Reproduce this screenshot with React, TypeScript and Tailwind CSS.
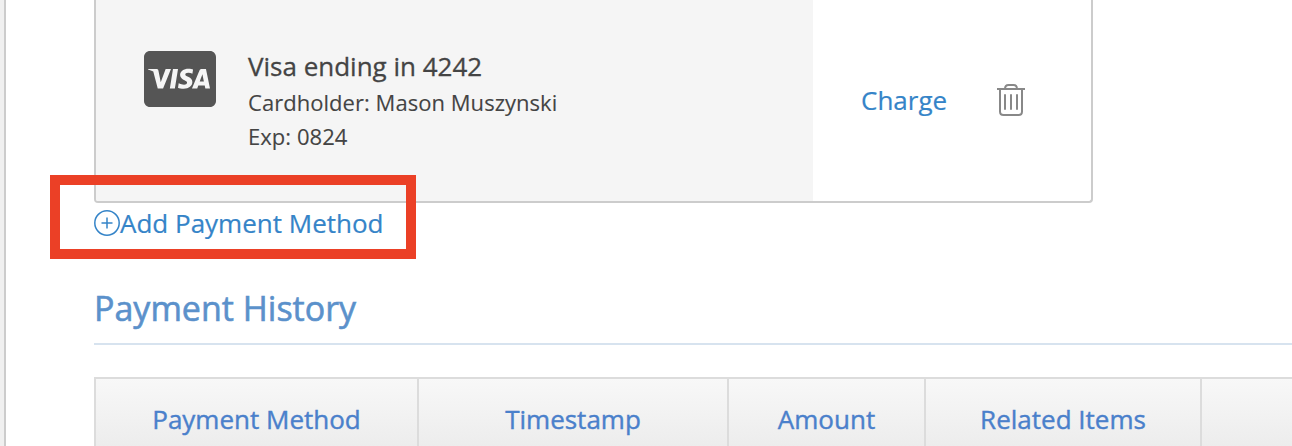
import React from "react";
import { FaCcVisa } from "react-icons/fa";

const columns = [
  { label: "Payment Method", width: "w-[323px]" },
  { label: "Timestamp", width: "w-[310px]" },
  { label: "Amount", width: "w-[197px]" },
  { label: "Related Items", width: "w-[276px]" },
  { label: "", width: "w-[200px]" },
];

function TrashIcon() {
  return (
    <svg width="28" height="34" viewBox="0 0 28 34" fill="none" stroke="#888" strokeWidth="2">
      <path d="M0 6H28" />
      <path d="M8 6C8 3 9.500 2 11.500 2H16.500C18.500 2 20 3 20 6" />
      <path d="M3 6V28.500Q3 32 6.500 32H21.500Q25 32 25 28.500V6" />
      <path d="M8 12V26M14 12V26M20 12V26" strokeLinecap="round" />
    </svg>
  );
}

function PlusCircleIcon() {
  return (
    <svg width="26" height="26" viewBox="0 0 26 26" fill="none" stroke="currentColor" strokeWidth="1.500">
      <circle cx="13" cy="13" r="12.200" />
      <path d="M13 7.500V18.500M7.500 13H18.500" />
    </svg>
  );
}

function PaymentCard() {
  return (
    <div className="flex h-[203px] w-[999px] overflow-hidden rounded-b border-x-2 border-b-2 border-[#ccc]">
      <div className="flex w-[717px] bg-[#f5f5f5] pl-12 pt-[47px] text-[#444]">
        <FaCcVisa className="h-16 w-[72px] text-[#555]" />
        <div className="ml-8">
          <h3 className="text-[26px] leading-[38px] [-webkit-text-stroke:0.3px]">Visa ending in 4242</h3>
          <p className="text-[22px] leading-[34px] tracking-[0.04px] [-webkit-text-stroke:0.1px]">Cardholder: Mason Muszynski</p>
          <p className="text-[22px] leading-[34px] tracking-[0.04px] [-webkit-text-stroke:0.1px]">Exp: 0824</p>
        </div>
      </div>
      <div className="flex flex-1 items-center pl-12">
        <a href="#" className="text-[26px] text-[#3584c8] [-webkit-text-stroke:0.2px]">Charge</a>
        <button className="mb-0.5 ml-[50px]" aria-label="Delete payment method">
          <TrashIcon />
        </button>
      </div>
    </div>
  );
}

export default function App() {
  return (
    <div className="relative flex h-[446px] w-[1292px] overflow-hidden bg-white font-['Open_Sans',sans-serif]">
      <div className="w-1.5 shrink-0 border-r-2 border-[#ccc] bg-[#f0f0f0]" />

      <main className="w-[1286px] shrink-0 pl-[88px]">
        <PaymentCard />

        <a href="#" className="flex h-10 w-fit items-center text-[26px] text-[#3584c8]">
          <PlusCircleIcon />
          <span className="[-webkit-text-stroke:0.2px]">Add Payment Method</span>
        </a>

        <h2 className="mt-10 h-[62px] border-b-2 border-[#d7e3ef] text-[34px] leading-[50px] text-[#5b91cb] [-webkit-text-stroke:0.6px]">
          Payment History
        </h2>

        <div className="mt-8 flex h-[90px] w-[1306px] border-l-2 border-t-2 border-[#dcdcdc] bg-linear-to-b from-[#f8f8f8] to-[#e9e9e9]">
          {columns.map((column) => (
            <div
              key={column.label}
              className={`${column.width} shrink-0 border-r-2 border-[#dcdcdc] pt-5 text-center text-[26px] leading-10 text-[#4a80cb] [-webkit-text-stroke:0.4px]`}
            >
              {column.label}
            </div>
          ))}
        </div>
      </main>

      {/* Highlight around the add link */}
      <div className="pointer-events-none absolute left-[50px] top-[175px] h-[84px] w-[366px] border-[10px] border-[#eb4026]" />
    </div>
  );
}
